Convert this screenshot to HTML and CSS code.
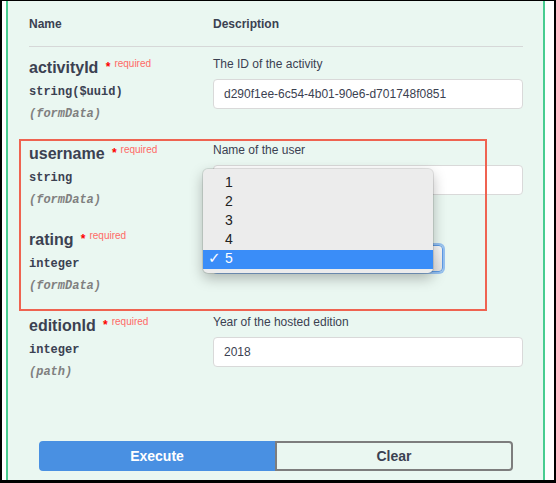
FILE: index.html
```html
<!DOCTYPE html>
<html>
<head>
<meta charset="utf-8">
<link rel="stylesheet" href="styles.css">
</head>
<body>
<div class="frame">
  <div class="opblock">
    <div class="params">
      <div class="head">
        <div class="col-name">Name</div>
        <div class="col-desc">Description</div>
      </div>
      <div class="row">
        <div class="col-name">
          <div class="pname">activityId<span class="star">&nbsp;*</span><span class="req">required</span></div>
          <div class="ptype">string($uuid)</div>
          <div class="pin">(formData)</div>
        </div>
        <div class="col-desc">
          <div class="pdesc">The ID of the activity</div>
          <div class="input">d290f1ee-6c54-4b01-90e6-d701748f0851</div>
        </div>
      </div>
      <div class="row">
        <div class="col-name">
          <div class="pname">username<span class="star">&nbsp;*</span><span class="req">required</span></div>
          <div class="ptype">string</div>
          <div class="pin">(formData)</div>
        </div>
        <div class="col-desc">
          <div class="pdesc">Name of the user</div>
          <div class="input"></div>
        </div>
      </div>
      <div class="row">
        <div class="col-name">
          <div class="pname">rating<span class="star">&nbsp;*</span><span class="req">required</span></div>
          <div class="ptype">integer</div>
          <div class="pin">(formData)</div>
        </div>
        <div class="col-desc">
          <div class="select"></div>
        </div>
      </div>
      <div class="row">
        <div class="col-name">
          <div class="pname">editionId<span class="star">&nbsp;*</span><span class="req">required</span></div>
          <div class="ptype">integer</div>
          <div class="pin">(path)</div>
        </div>
        <div class="col-desc">
          <div class="pdesc">Year of the hosted edition</div>
          <div class="input">2018</div>
        </div>
      </div>
    </div>
    <div class="btns">
      <div class="btn execute">Execute</div>
      <div class="btn clear">Clear</div>
    </div>
  </div>
  <div class="highlight"></div>
  <div class="popup">
    <div class="opt">1</div>
    <div class="opt">2</div>
    <div class="opt">3</div>
    <div class="opt">4</div>
    <div class="opt sel"><span class="check">✓</span>5</div>
  </div>
</div>
</body>
</html>
```

FILE: styles.css
```css
html, body {
  margin: 0;
  padding: 0;
  background: #fff;
}
body {
  font-family: "Liberation Sans", Arial, sans-serif;
  color: #3b4151;
}
.frame {
  position: relative;
  box-sizing: border-box;
  width: 556px;
  height: 483px;
  border-style: solid;
  border-color: #000;
  border-width: 1px 2px 3px 2px;
  padding: 0 9px 0 4px;
  background: #fff;
}
.opblock {
  box-sizing: border-box;
  height: 100%;
  border-left: 2px solid #49cc90;
  border-right: 2px solid #49cc90;
  background: #eaf7f1;
}
.params {
  padding: 0 20px 0 21px;
}
.head {
  display: grid;
  grid-template-columns: 184px 1fr;
  padding: 16px 0 14px;
  line-height: 15px;
  font-size: 12px;
  font-weight: bold;
  border-bottom: 1px solid #d6d8d8;
}
.row {
  box-sizing: border-box;
  display: grid;
  grid-template-columns: 184px 1fr;
  height: 86px;
  padding-top: 9.5px;
}
.pname {
  margin-top: 2px;
  font-size: 16px;
  font-weight: bold;
  line-height: 18px;
  height: 18px;
  white-space: nowrap;
}
.star {
  position: relative;
  top: -2px;
  margin-left: 4px;
  font-size: 12px;
  color: red;
}
.req {
  position: relative;
  top: -6px;
  padding-left: 4px;
  font-size: 10px;
  font-weight: normal;
  color: #ff6a66;
}
.ptype {
  margin-top: 8.3px;
  font-family: "Liberation Mono", monospace;
  font-size: 12px;
  font-weight: bold;
  line-height: 14px;
}
.pin {
  margin-top: 8px;
  font-family: "Liberation Mono", monospace;
  font-size: 12px;
  font-weight: bold;
  font-style: italic;
  color: #808080;
  line-height: 14px;
}
.pdesc {
  font-size: 12px;
  line-height: 15px;
}
.input {
  box-sizing: border-box;
  margin-top: 7px;
  height: 30px;
  border: 1px solid #d9d9d9;
  border-radius: 4px;
  background: #fff;
  padding: 0 10px;
  font-size: 12px;
  line-height: 28px;
}
.select {
  box-sizing: border-box;
  margin-top: 16.5px;
  width: 230px;
  height: 27px;
  border: 1px solid #5d9be6;
  border-radius: 4px;
  background: linear-gradient(#f8f8f8, #e4e4e4);
  box-shadow: 0 0 0 2px rgba(80, 150, 240, 0.55);
}
.btns {
  display: flex;
  margin: 50px 0 0 31px;
}
.btn {
  box-sizing: border-box;
  height: 30px;
  font-size: 14px;
  font-weight: bold;
  line-height: 26px;
  text-align: center;
}
.execute {
  width: 236px;
  background: #4990e2;
  border: 2px solid #4990e2;
  border-radius: 4px 0 0 4px;
  color: #fff;
}
.clear {
  width: 238px;
  border: 2px solid #7d7d7d;
  border-radius: 0 4px 4px 0;
  color: #3b4151;
}
.highlight {
  position: absolute;
  left: 17px;
  top: 138px;
  width: 468px;
  height: 172px;
  box-sizing: border-box;
  border: 2px solid #ef6351;
}
.popup {
  position: absolute;
  left: 201px;
  top: 168px;
  width: 230px;
  box-sizing: border-box;
  padding: 5px 0 4px;
  background: #ececec;
  border-radius: 5px;
  box-shadow: 0 0 0 1px rgba(0, 0, 0, 0.1), 0 5px 14px rgba(0, 0, 0, 0.28);
}
.opt {
  position: relative;
  height: 19px;
  line-height: 16px;
  padding-left: 22px;
  font-size: 14px;
  color: #222;
}
.opt.sel {
  background: #3a8df8;
  color: #fff;
}
.check {
  position: absolute;
  left: 5px;
  top: 0;
  font-size: 15px;
  font-family: "DejaVu Sans", sans-serif;
}
```
